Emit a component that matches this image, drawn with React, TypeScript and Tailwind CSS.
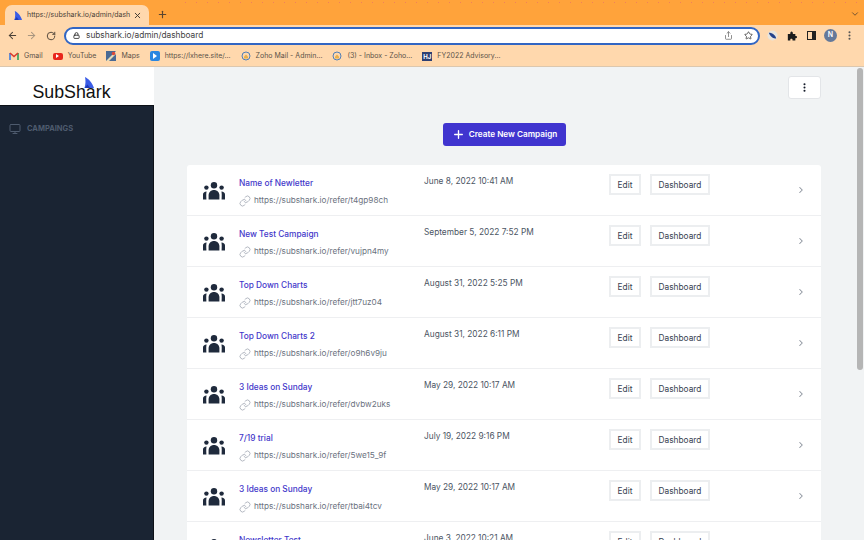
import { ArrowLeft, ArrowRight, ChevronDown, ChevronRight, EllipsisVertical, Link, Lock, Monitor, Plus, RotateCw, Share, Star, X } from "lucide-react";

const campaigns = [
  { name: "Name of Newletter", date: "June 8, 2022 10:41 AM", url: "https://subshark.io/refer/t4gp98ch" },
  { name: "New Test Campaign", date: "September 5, 2022 7:52 PM", url: "https://subshark.io/refer/vujpn4my" },
  { name: "Top Down Charts", date: "August 31, 2022 5:25 PM", url: "https://subshark.io/refer/jtt7uz04" },
  { name: "Top Down Charts 2", date: "August 31, 2022 6:11 PM", url: "https://subshark.io/refer/o9h6v9ju" },
  { name: "3 Ideas on Sunday", date: "May 29, 2022 10:17 AM", url: "https://subshark.io/refer/dvbw2uks" },
  { name: "7/19 trial", date: "July 19, 2022 9:16 PM", url: "https://subshark.io/refer/5we15_9f" },
  { name: "3 Ideas on Sunday", date: "May 29, 2022 10:17 AM", url: "https://subshark.io/refer/tbai4tcv" },
  { name: "Newsletter Test", date: "June 3, 2022 10:21 AM", url: "https://subshark.io/refer/k2mw8zqa" },
];

const SharkFin = ({ className }: { className: string }) => (
  <svg viewBox="0 0 10 11" className={className}>
    <path d="M1 0 C4.5 1.5 8.5 6 10 11 L0.5 11 C1.6 7.5 1.8 3.5 1 0 Z" fill="#3a5ce6" />
    <path d="M0.5 11 L3.5 7.5 L6 11 Z" fill="#1f3bb8" />
  </svg>
);

const GroupIcon = () => (
  <svg viewBox="0 0 22 18" className="h-[18px] w-[22px]" fill="#1f2a3c">
    <circle cx="11" cy="3.3" r="3.2" />
    <circle cx="3.4" cy="5.6" r="2.2" />
    <circle cx="18.6" cy="5.6" r="2.2" />
    <path d="M5.6 17.5 V13.5 C5.6 10.2 8 8 11 8 C14 8 16.4 10.2 16.4 13.5 V17.5 Z" />
    <path d="M0 17.5 V12.5 C0 10.8 1.4 9.8 3.6 9.6 C3.2 11 3.2 13 3.4 17.5 Z" />
    <path d="M22 17.5 V12.5 C22 10.8 20.6 9.8 18.4 9.6 C18.8 11 18.8 13 18.6 17.5 Z" />
  </svg>
);

const Bookmark = ({ icon, label }: { icon: React.ReactNode; label: string }) => (
  <div className="flex items-center gap-[5px]">
    {icon}
    <span>{label}</span>
  </div>
);

const MailRing = () => (
  <svg viewBox="0 0 10 10" className="h-[10px] w-[10px]" fill="none">
    <circle cx="5" cy="5" r="4" stroke="#4f7fb8" strokeWidth="1" />
    <path d="M3 5.5 L5 3.5 L7 5.5 V7.5 H3 Z" fill="#e9b04a" />
  </svg>
);

const Browser = () => (
  <div className="relative shrink-0 font-['Inter',sans-serif]">
    <div className="absolute left-[180px] right-0 top-[1px] h-[3px] bg-[radial-gradient(#f0805a_0.6px,transparent_0.8px)] bg-[length:11px_3px]" />
    <div className="flex h-[25px] items-end bg-[#ffa33b] pl-[5px]">
      <div className="flex h-[20px] w-[144px] items-center rounded-t-[7px] bg-[#ffd8ad] pl-[9px] pr-[7px] text-[7px] text-[#4a4036]">
        <SharkFin className="h-[9px] w-[8px] shrink-0" />
        <span className="ml-[5px] whitespace-nowrap">https://subshark.io/admin/dash</span>
        <X size={9} strokeWidth={2.5} className="ml-auto shrink-0 text-[#3d3630]" />
      </div>
      <Plus size={11} strokeWidth={2.5} className="mb-[5px] ml-[8px] text-[#5a4630]" />
      <ChevronDown size={10} className="mb-[6px] ml-auto mr-[4px] text-[#5a4630]" />
    </div>
    <div className="flex h-[21px] items-center bg-[#ffd8ad] pl-[7px] pr-[2px]">
      <ArrowLeft size={11} strokeWidth={2.2} className="text-[#4a4036]" />
      <ArrowRight size={11} strokeWidth={2.2} className="ml-[8px] text-[#a8957f]" />
      <RotateCw size={10} strokeWidth={2.2} className="ml-[9px] text-[#4a4036]" />
      <div className="ml-[8px] flex h-[18px] w-[696px] items-center rounded-full border-2 border-[#3166c4] bg-white pl-[7px] pr-[5px] text-[8.3px] text-[#3f3f3f]">
        <Lock size={7} strokeWidth={3} className="text-[#333]" />
        <span className="ml-[6px]">subshark.io/admin/dashboard</span>
        <Share size={9} className="ml-auto text-[#6b6b6b]" />
        <Star size={9} strokeWidth={2.2} className="ml-[11px] text-[#444]" />
      </div>
      <svg viewBox="0 0 12 12" className="ml-[7px] h-[11px] w-[11px]">
        <circle cx="6" cy="6" r="5.5" fill="#e8e4dc" />
        <path d="M2 3 C5 3 9 5 10 9 C7 10 3.5 7 2 3 Z" fill="#23428c" />
      </svg>
      <svg viewBox="0 0 12 12" className="ml-[9px] h-[10px] w-[10px]" fill="#1c1c1c">
        <path d="M1 3.5 H4 C3.6 1.5 4.6 0.5 5.5 0.5 C6.4 0.5 7.4 1.5 7 3.5 H10 V6 C11.8 5.6 12 6.6 12 7.3 C12 8 11.8 9 10 8.6 V11.5 H6.6 C7 9.8 6 9.4 5.2 9.4 C4.4 9.4 3.6 9.8 4 11.5 H1 Z" />
      </svg>
      <div className="ml-[10px] h-[9px] w-[9px] border border-r-[4px] border-[#222]" />
      <div className="ml-[8px] flex h-[13px] w-[13px] items-center justify-center rounded-full bg-[#64799a] text-[7px] font-semibold text-white">N</div>
      <EllipsisVertical size={11} strokeWidth={2.5} className="ml-[7px] text-[#555]" />
    </div>
    <div className="flex h-[21px] items-center gap-[10px] border-b border-[#dcc7ae] bg-[#ffd8ad] pl-[9px] text-[7px] text-[#5b5248]">
      <Bookmark
        label="Gmail"
        icon={
          <svg viewBox="0 0 10 8" className="h-[8px] w-[10px]" fill="none" strokeWidth="1.6">
            <path d="M1 8 V1" stroke="#3f7de0" />
            <path d="M9 8 V1" stroke="#2fa05a" />
            <path d="M1 1 L5 4.5 L9 1" stroke="#dc3a2c" />
          </svg>
        }
      />
      <Bookmark
        label="YouTube"
        icon={
          <span className="flex h-[7px] w-[10px] items-center justify-center rounded-[2px] bg-[#e8261c]">
            <span className="h-0 w-0 border-y-[2px] border-l-[3px] border-y-transparent border-l-white" />
          </span>
        }
      />
      <Bookmark
        label="Maps"
        icon={
          <svg viewBox="0 0 10 10" className="h-[10px] w-[10px]">
            <rect width="10" height="10" fill="#4a6a94" />
            <path d="M0 10 L10 0 V3 L3 10 Z" fill="#e8dcb8" />
            <circle cx="7.5" cy="2.5" r="1.8" fill="#d9483a" />
          </svg>
        }
      />
      <Bookmark
        label="https://lxhere.site/..."
        icon={
          <span className="flex h-[10px] w-[10px] items-center justify-center rounded-[2px] bg-[#2a86e0]">
            <span className="h-0 w-0 border-y-[3px] border-l-[4px] border-y-transparent border-l-white" />
          </span>
        }
      />
      <Bookmark label="Zoho Mail - Admin..." icon={<MailRing />} />
      <Bookmark label="(3) - Inbox - Zoho..." icon={<MailRing />} />
      <Bookmark
        label="FY2022 Advisory..."
        icon={<span className="h-[9px] w-[10px] bg-[#2d3f73] text-center text-[6px] font-bold leading-[9px] text-white">HJ</span>}
      />
    </div>
  </div>
);

const Row = ({ name, date, url }: { name: string; date: string; url: string }) => (
  <div className="flex h-[51px] shrink-0 border-b border-[#eeeff1]">
    <div className="flex w-[52px] shrink-0 items-center pl-[16px] pt-[1px]">
      <GroupIcon />
    </div>
    <div className="w-[185px] shrink-0 pt-[12px]">
      <div className="text-[8.3px] font-medium leading-[13px] text-[#4338ca]">{name}</div>
      <div className="mt-[4px] flex items-center gap-[3px] text-[8.2px] leading-[13px] text-[#6b7280]">
        <Link size={12} strokeWidth={1.5} className="text-[#9ca3af]" />
        {url}
      </div>
    </div>
    <div className="w-[185px] shrink-0 pt-[10px] text-[8.3px] leading-[13px] text-[#4b5563]">{date}</div>
    <div className="flex shrink-0 items-start gap-[9px] pt-[9px]">
      <button className="h-[21px] w-[32px] border-2 border-[#eceef0] pt-[1px] text-[8.3px] text-[#374151]">Edit</button>
      <button className="h-[21px] w-[60px] border-2 border-[#eceef0] pt-[1px] text-[8.3px] text-[#374151]">Dashboard</button>
    </div>
    <ChevronRight size={10} strokeWidth={2.5} className="ml-auto mr-[15px] mt-[20px] text-[#8b929c]" />
  </div>
);

export default function App() {
  return (
    <div className="flex h-[540px] w-[864px] flex-col overflow-hidden font-['Inter',sans-serif]">
      <Browser />
      <div className="flex min-h-0 flex-1">
        <aside className="flex w-[154px] shrink-0 flex-col">
          <div className="relative flex h-[38px] items-end justify-center bg-white pb-[2px] pr-[11px]">
            <SharkFin className="absolute left-[84px] top-[10px] h-[11px] w-[10px]" />
            <span className="font-['Liberation_Sans',sans-serif] text-[17.8px] leading-[22px] text-[#111]">SubShark</span>
          </div>
          <div className="flex flex-1 items-start gap-[6px] border-r border-t border-[#0d1117] bg-[#1a2433] pl-[9px] pt-[17px] text-[7.5px] font-bold text-[#4e5b6e]">
            <Monitor size={12} />
            <span className="leading-[12px]">CAMPAINGS</span>
          </div>
        </aside>
        <main className="flex min-w-0 flex-1 flex-col bg-[#f1f3f4]">
          <div className="flex justify-end pr-[33px] pt-[9px]">
            <div className="flex h-[23px] w-[33px] items-center justify-center rounded-[3px] border border-[#e3e5e8] bg-white">
              <EllipsisVertical size={11} strokeWidth={2.5} className="text-[#111827]" />
            </div>
          </div>
          <div className="flex justify-center pl-[1px] pt-[24px]">
            <button className="flex h-[23px] w-[123px] items-center justify-center gap-[4px] rounded-[3px] bg-[#4034cf] text-[8.2px] font-semibold text-white">
              <Plus size={13} strokeWidth={2.5} />
              Create New Campaign
            </button>
          </div>
          <div className="ml-[33px] mt-[19px] flex w-[634px] flex-col rounded-[3px] bg-white">
            {campaigns.map((c) => (
              <Row key={c.url} {...c} />
            ))}
          </div>
        </main>
        <div className="relative w-[10px] shrink-0 bg-[#f1f3f4]">
          <div className="absolute right-[1px] top-[1px] h-[302px] w-[6px] rounded-full bg-[#b5b5b5]" />
        </div>
      </div>
    </div>
  );
}
